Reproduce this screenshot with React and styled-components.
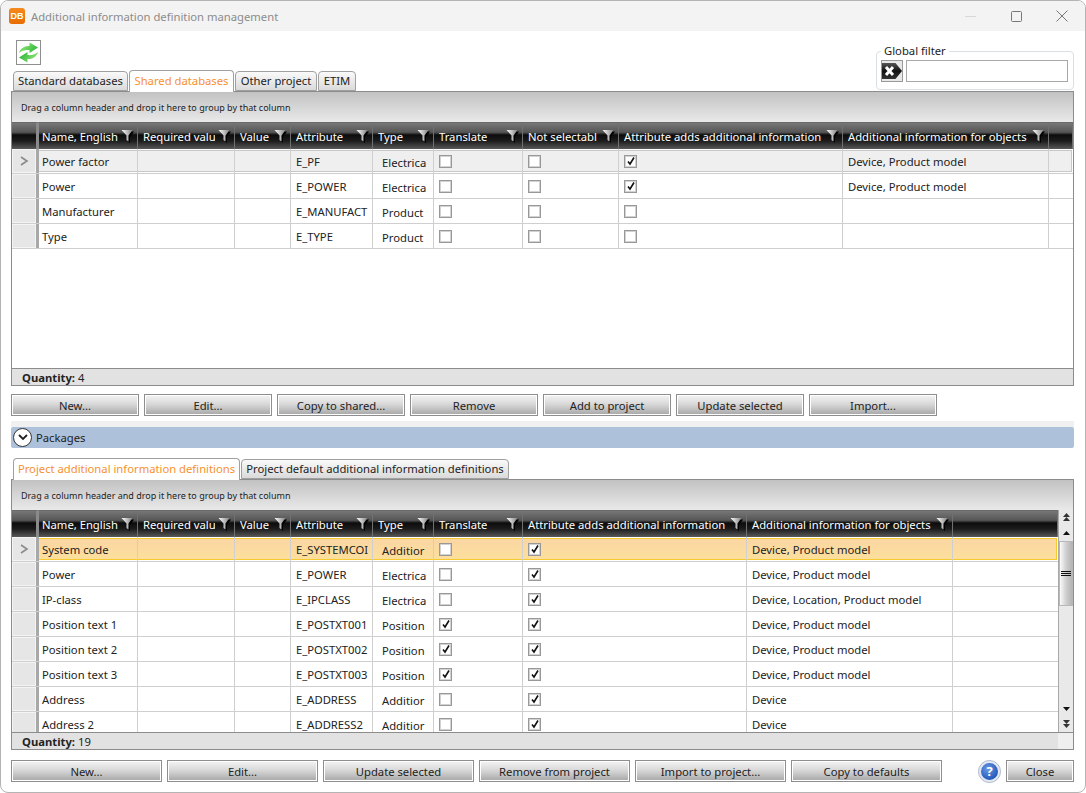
import React from 'react';
import styled, { createGlobalStyle } from 'styled-components';

const GlobalStyle = createGlobalStyle`
  html, body { margin: 0; padding: 0; background: #fff; }
  body { font-family: "Noto Sans", "Open Sans", "Liberation Sans", sans-serif; font-size: 11.25px; color: #222; }
  * { box-sizing: border-box; }
`;

const Window = styled.div`
  width: 1086px;
  height: 793px;
  display: flex;
  flex-direction: column;
  background: #fff;
  border: 1px solid #b4b4b4;
  border-radius: 8px;
  overflow: hidden;
`;
const TitleBar = styled.div`
  height: 30px;
  flex: none;
  display: flex;
  align-items: center;
  background: #f3f3f3;
  padding-left: 8px;
`;
const Logo = styled.div`
  width: 16px;
  height: 16px;
  border-radius: 3px;
  background: linear-gradient(#f58a1f, #e86c00);
  color: #fff;
  font-size: 9px;
  font-weight: 700;
  line-height: 16px;
  text-align: center;
  font-family: "Liberation Sans", sans-serif;
`;
const TitleText = styled.div`
  margin-left: 6px;
  font-size: 11.25px;
  color: #8c8c8c;
  flex: 1;
`;
const WinButton = styled.div`
  width: 46px;
  height: 30px;
  display: flex;
  align-items: center;
  justify-content: center;
`;
const Content = styled.div`
  flex: 1;
  display: flex;
  flex-direction: column;
  padding: 0 11px 0 10px;
  min-height: 0;
`;
const TopArea = styled.div`
  height: 60px;
  flex: none;
  display: flex;
  justify-content: space-between;
`;
const TopLeft = styled.div`
  display: flex;
  flex-direction: column;
  justify-content: space-between;
  padding: 9px 0 0 2px;
`;
const RefreshButton = styled.div`
  width: 25px;
  height: 25px;
  margin-left: 3px;
  border: 1px solid #8f8f8f;
  background: #fff;
  display: flex;
  align-items: center;
  justify-content: center;
`;
const FilterGroup = styled.fieldset`
  margin: 13px 0 1px;
  width: 198px;
  border: 1px solid #d8e0e6;
  border-radius: 4px;
  padding: 2px 5px 0 4px;
  display: flex;
  align-items: flex-start;
  gap: 3px;
  height: 46px;
  legend {
    margin-left: 0;
    padding: 0 3px;
    font-size: 11.25px;
    line-height: 14px;
    color: #222;
  }
`;
const ClearButton = styled.div`
  width: 22px;
  height: 22px;
  border: 1px solid #9a9a9a;
  background: #e8e8e8;
  display: flex;
  align-items: center;
  justify-content: center;
`;
const FilterInput = styled.input`
  width: 162px;
  height: 22px;
  border: 1px solid #a8a8a8;
  background: #fff;
  outline: none;
`;
const TabStrip = styled.div`
  display: flex;
  align-items: flex-end;
  gap: 1px;
  height: ${p => p.$h}px;
  flex: none;
  padding-left: ${p => p.$pad}px;
`;
const Tab = styled.div`
  width: ${p => p.$w}px;
  height: ${p => (p.$active ? 22 : 20)}px;
  border: 1px solid #a0a0a0;
  border-bottom: ${p => (p.$active ? 'none' : '1px solid #a0a0a0')};
  border-radius: 4px 4px 0 0;
  background: ${p => (p.$active ? '#fff' : 'linear-gradient(#fafafa, #dadada)')};
  color: ${p => (p.$active ? '#f7912f' : '#222')};
  display: flex;
  align-items: center;
  justify-content: center;
  white-space: nowrap;
  overflow: hidden;
  padding-bottom: ${p => (p.$active ? 2 : 1)}px;
  margin-bottom: ${p => (p.$active ? -1 : 0)}px;
  position: relative;
`;
const GridBox = styled.div`
  height: ${p => p.$h}px;
  flex: none;
  display: flex;
  flex-direction: column;
  border: 1px solid #8c8c8c;
  background: #fff;
`;
const GroupPanel = styled.div`
  height: 30px;
  flex: none;
  display: flex;
  align-items: center;
  padding-left: 9px;
  font-size: 9px;
  color: #222;
  background: linear-gradient(#c2c2c2, #e9e9e9);
`;
const GridBody = styled.div`
  flex: 1;
  display: flex;
  min-height: 0;
`;
const GridMain = styled.div`
  flex: 1;
  min-width: 0;
  display: flex;
  flex-direction: column;
  overflow: hidden;
`;
const Row = styled.div`
  display: grid;
  grid-template-columns: ${p => p.$cols};
  height: ${p => p.$h || 25}px;
  flex: none;
`;
const HeaderRow = styled(Row)`
  background: linear-gradient(#7a7a7a 0, #565656 38%, #0c0c0c 48%, #1c1c1c 70%, #585858 100%);
`;
const HeaderCell = styled.div`
  display: flex;
  align-items: center;
  justify-content: space-between;
  gap: 3px;
  min-width: 0;
  padding: 0 3px 0 ${p => p.$pad}px;
  color: #fff;
  border-right: 1px solid #707070;
  border-top: 1px solid #6a6a6a;
  &:first-child {
    border-right: 3px solid #8a8a8a;
  }
`;
const HeaderLabel = styled.span`
  overflow: hidden;
  white-space: nowrap;
  min-width: 0;
`;
const DataRow = styled(Row)`
  border-bottom: 1px solid #cfcfcf;
  background: ${p =>
    p.$state === 'active' ? 'linear-gradient(#fad5a4, #fde09b)' : p.$state === 'selected' ? '#efefef' : '#fff'};
  box-shadow: ${p =>
    p.$state === 'active'
      ? 'inset 0 0 0 1px #fff, inset 0 0 0 2px #f6c92e'
      : p.$state === 'selected'
      ? 'inset 0 0 0 1px #fff, inset 0 0 0 2px #c8c8c8'
      : 'none'};
`;
const RowHeader = styled.div`
  background: #fff;
  border-right: 3px solid #a8a8a8;
  display: flex;
`;
const RowHeaderFace = styled.div`
  flex: 1;
  background: #e6e6e6;
  border: 1px solid #f4f4f4;
  display: flex;
  align-items: center;
  justify-content: center;
`;
const Cell = styled.div`
  display: flex;
  align-items: center;
  min-width: 0;
  overflow: hidden;
  white-space: nowrap;
  padding-left: ${p => p.$pad}px;
  padding-top: ${p => (p.$low ? 2 : 0)}px;
  border-right: 1px solid #cfcfcf;
  &:last-child {
    border-right: none;
  }
`;
const CheckBox = styled.div`
  width: 13px;
  height: 13px;
  flex: none;
  border: 1px solid #989898;
  background: #fff;
  box-shadow: inset 0 0 0 1px #d2d2d2;
  display: flex;
  align-items: center;
  justify-content: center;
`;
const Footer = styled.div`
  height: 17px;
  flex: none;
  border-top: 1px solid #8c8c8c;
  background: ${p => (p.$scroll ? 'linear-gradient(90deg, #e2e2e2 calc(100% - 15px), #efefef 0)' : '#e2e2e2')};
  display: flex;
  align-items: center;
  padding-left: 10px;
  gap: 3px;
  b { font-weight: 700; }
`;
const ScrollBar = styled.div`
  width: 15px;
  flex: none;
  display: flex;
  flex-direction: column;
  background: #e9e9e9;
  border-left: 1px solid #a8a8a8;
`;
const ScrollEnd = styled.div`
  height: ${p => p.$h}px;
  flex: none;
  display: flex;
  align-items: center;
  justify-content: center;
`;
const ScrollThumb = styled.div`
  height: 65px;
  flex: none;
  border: 1px solid #b8b8b8;
  background: linear-gradient(90deg, #fafafa, #d0d0d0 50%, #b4b4b4);
  display: flex;
  align-items: center;
  justify-content: center;
`;
const ScrollTrack = styled.div`
  flex: 1;
`;
const ButtonRow = styled.div`
  display: flex;
  align-items: center;
  gap: 5px;
  margin-top: ${p => p.$top}px;
  height: 22px;
  flex: none;
`;
const ActionButton = styled.div`
  width: ${p => p.$w}px;
  height: 22px;
  flex: none;
  border: 1px solid #8e8e8e;
  box-shadow: inset 0 0 0 1px #fff;
  background: linear-gradient(#f4f4f4 0, #dcdcdc 40%, #d0d0d0 55%, #a6a6a6 100%);
  display: flex;
  align-items: center;
  justify-content: center;
  color: #222;
  padding-top: 1px;
`;
const Spacer = styled.div`
  flex: 1;
`;
const HelpIcon = styled.div`
  width: 21px;
  height: 21px;
  border-radius: 50%;
  background: radial-gradient(circle at 40% 35%, #6f9be6, #1f56b8 75%);
  border: 2px solid #e3e8f2;
  outline: 1px solid #a9b5cc;
  color: #fff;
  font-weight: 700;
  font-size: 13px;
  line-height: 17px;
  text-align: center;
  margin-right: 1px;
`;
const Strip = styled.div`
  height: 6px;
  margin-top: 5px;
  flex: none;
  background: #f0f0f0;
`;
const PackagesBar = styled.div`
  height: 21px;
  flex: none;
  background: #adc1da;
  border-radius: 2px;
  display: flex;
  align-items: center;
  gap: 4px;
  padding-left: 2px;
`;
const Expander = styled.div`
  width: 19px;
  height: 19px;
  border-radius: 50%;
  background: #fff;
  border: 1.5px solid #333;
  display: flex;
  align-items: center;
  justify-content: center;
`;

const FunnelIcon = () => (
  <svg width="13" height="14" viewBox="0 0 13 14" style={{ flex: 'none' }}>
    <defs>
      <linearGradient id="fg" x1="0" x2="1" y1="0" y2="0">
        <stop offset="0" stopColor="#fff" />
        <stop offset="1" stopColor="#808080" />
      </linearGradient>
    </defs>
    <path d="M2 2.500h11L9 8v6l-2-1.500V8z" fill="#000" />
    <path d="M0.500 1h11L7.500 6.500v6l-2-1.500V6.500z" fill="url(#fg)" />
  </svg>
);
const Chevron = () => (
  <svg width="9" height="10" viewBox="0 0 9 10">
    <path d="M1 1l6 4-6 4" fill="none" stroke="#8a8a8a" strokeWidth="1.6" />
  </svg>
);
const Tick = () => (
  <svg width="10" height="10" viewBox="0 0 10 10">
    <path d="M2 5.500l2 2.500L8 1.500" fill="none" stroke="#111" strokeWidth="1.6" />
  </svg>
);
const refreshArrow = 'M2 12C3 7.500 7.500 4.500 12.500 5V1.500L21 6.500 12.500 12V9C8.500 8.500 4.500 9.500 2 12z';
const RefreshIcon = () => (
  <svg width="23" height="23" viewBox="0 0 23 23">
    <defs>
      <linearGradient id="rg" x1="0" x2="1" y1="0" y2="0.400">
        <stop offset="0" stopColor="#a4ee86" />
        <stop offset="1" stopColor="#36bb3e" />
      </linearGradient>
    </defs>
    <path d={refreshArrow} fill="url(#rg)" />
    <path d={refreshArrow} fill="url(#rg)" transform="rotate(180 11.500 11.500)" />
  </svg>
);
const ClearIcon = () => (
  <svg width="20" height="20" viewBox="0 0 20 20">
    <defs>
      <linearGradient id="cg" x1="0" x2="0" y1="0" y2="1">
        <stop offset="0" stopColor="#555" />
        <stop offset="0.5" stopColor="#111" />
        <stop offset="1" stopColor="#333" />
      </linearGradient>
    </defs>
    <path d="M0 2h13.500L20 10l-6.500 8H0z" fill="url(#cg)" />
    <path d="M4 6l7 8M11 6l-7 8" stroke="#fff" strokeWidth="3" />
  </svg>
);
const Arrow = ({ down }) => (
  <svg width="9" height="6" viewBox="0 0 9 6">
    <path d={down ? 'M1 1h7L4.500 5z' : 'M1 5h7L4.500 1z'} fill="#111" />
  </svg>
);
const DoubleArrow = ({ down }) => (
  <svg width="9" height="10" viewBox="0 0 9 10">
    <path d={down ? 'M1 1h7L4.500 5zM1 5h7L4.500 9z' : 'M4.500 1L8 5H1zM4.500 5L8 9H1z'} fill="#333" />
  </svg>
);

const topColumns = [
  { title: 'Name, English', w: 99, pad: 3 },
  { title: 'Required valu', w: 97, pad: 5 },
  { title: 'Value', w: 56, pad: 5 },
  { title: 'Attribute', w: 82, pad: 5 },
  { title: 'Type', w: 61, pad: 5, cellPad: 9, low: true },
  { title: 'Translate', w: 89, pad: 5, check: true },
  { title: 'Not selectabl', w: 96, pad: 5, check: true },
  { title: 'Attribute adds additional information', w: 224, pad: 5, check: true },
  { title: 'Additional information for objects', w: 206, pad: 5 },
];
const bottomColumns = [
  { title: 'Name, English', w: 99, pad: 3 },
  { title: 'Required valu', w: 97, pad: 5 },
  { title: 'Value', w: 56, pad: 5 },
  { title: 'Attribute', w: 82, pad: 5 },
  { title: 'Type', w: 61, pad: 5, cellPad: 9, low: true },
  { title: 'Translate', w: 89, pad: 5, check: true },
  { title: 'Attribute adds additional information', w: 224, pad: 5, check: true },
  { title: 'Additional information for objects', w: 206, pad: 5 },
];
const topRows = [
  ['Power factor', '', '', 'E_PF', 'Electrica', false, false, true, 'Device, Product model'],
  ['Power', '', '', 'E_POWER', 'Electrica', false, false, true, 'Device, Product model'],
  ['Manufacturer', '', '', 'E_MANUFACT', 'Product', false, false, false, ''],
  ['Type', '', '', 'E_TYPE', 'Product', false, false, false, ''],
];
const bottomRows = [
  ['System code', '', '', 'E_SYSTEMCOI', 'Additior', false, true, 'Device, Product model'],
  ['Power', '', '', 'E_POWER', 'Electrica', false, true, 'Device, Product model'],
  ['IP-class', '', '', 'E_IPCLASS', 'Electrica', false, true, 'Device, Location, Product model'],
  ['Position text 1', '', '', 'E_POSTXT001', 'Position', true, true, 'Device, Product model'],
  ['Position text 2', '', '', 'E_POSTXT002', 'Position', true, true, 'Device, Product model'],
  ['Position text 3', '', '', 'E_POSTXT003', 'Position', true, true, 'Device, Product model'],
  ['Address', '', '', 'E_ADDRESS', 'Additior', false, true, 'Device'],
  ['Address 2', '', '', 'E_ADDRESS2', 'Additior', false, true, 'Device'],
];

const template = columns => `27px ${columns.map(c => `${c.w}px`).join(' ')} 1fr`;

const DataGrid = ({ columns, rows, height, rowState, quantity, scroll }) => {
  const cols = template(columns);
  return (
    <GridBox $h={height}>
      <GroupPanel>Drag a column header and drop it here to group by that column</GroupPanel>
      <GridBody>
        <GridMain>
          <HeaderRow $cols={cols} $h={27}>
            <HeaderCell $pad={0} />
            {columns.map(c => (
              <HeaderCell key={c.title} $pad={c.pad}>
                <HeaderLabel>{c.title}</HeaderLabel>
                <FunnelIcon />
              </HeaderCell>
            ))}
            <HeaderCell $pad={0} />
          </HeaderRow>
          {rows.map((row, i) => (
            <DataRow key={i} $cols={cols} $state={i === 0 ? rowState : undefined}>
              <RowHeader>
                <RowHeaderFace>{i === 0 && <Chevron />}</RowHeaderFace>
              </RowHeader>
              {columns.map((c, j) => (
                <Cell key={c.title} $pad={c.check ? 5 : c.cellPad || c.pad} $low={c.low}>
                  {c.check ? <CheckBox>{row[j] && <Tick />}</CheckBox> : row[j]}
                </Cell>
              ))}
              <Cell $pad={0} />
            </DataRow>
          ))}
        </GridMain>
        {scroll && (
          <ScrollBar>
            <ScrollEnd $h={14}><DoubleArrow /></ScrollEnd>
            <ScrollEnd $h={17}><Arrow /></ScrollEnd>
            <ScrollThumb>
              <svg width="10" height="6" viewBox="0 0 10 6">
                <path d="M0 .5h10M0 2.500h10M0 4.500h10" stroke="#111" />
              </svg>
            </ScrollThumb>
            <ScrollTrack />
            <ScrollEnd $h={14}><Arrow down /></ScrollEnd>
            <ScrollEnd $h={16}><DoubleArrow down /></ScrollEnd>
          </ScrollBar>
        )}
      </GridBody>
      <Footer $scroll={scroll}><b>Quantity:</b> {quantity}</Footer>
    </GridBox>
  );
};

export default function App() {
  return (
    <>
      <GlobalStyle />
      <Window>
        <TitleBar>
          <Logo>DB</Logo>
          <TitleText>Additional information definition management</TitleText>
          <WinButton>
            <svg width="11" height="11" viewBox="0 0 11 11"><path d="M0 5.500h11" stroke="#d8d8d8" /></svg>
          </WinButton>
          <WinButton>
            <svg width="11" height="11" viewBox="0 0 11 11"><rect x=".5" y=".5" width="10" height="10" rx="1" fill="none" stroke="#777" /></svg>
          </WinButton>
          <WinButton>
            <svg width="12" height="12" viewBox="0 0 12 12"><path d="M.5.5l11 11M11.500.5l-11 11" stroke="#777" /></svg>
          </WinButton>
        </TitleBar>
        <Content>
          <TopArea>
            <TopLeft>
              <RefreshButton><RefreshIcon /></RefreshButton>
              <TabStrip $h={22} $pad={0}>
                <Tab $w={115}>Standard databases</Tab>
                <Tab $w={105} $active>Shared databases</Tab>
                <Tab $w={82}>Other project</Tab>
                <Tab $w={38}>ETIM</Tab>
              </TabStrip>
            </TopLeft>
            <FilterGroup>
              <legend>Global filter</legend>
              <ClearButton><ClearIcon /></ClearButton>
              <FilterInput />
            </FilterGroup>
          </TopArea>
          <DataGrid columns={topColumns} rows={topRows} height={295} rowState="selected" quantity={4} />
          <ButtonRow $top={8}>
            <ActionButton $w={128}>New...</ActionButton>
            <ActionButton $w={128}>Edit...</ActionButton>
            <ActionButton $w={128}>Copy to shared...</ActionButton>
            <ActionButton $w={128}>Remove</ActionButton>
            <ActionButton $w={128}>Add to project</ActionButton>
            <ActionButton $w={128}>Update selected</ActionButton>
            <ActionButton $w={128}>Import...</ActionButton>
          </ButtonRow>
          <Strip />
          <PackagesBar>
            <Expander>
              <svg width="10" height="7" viewBox="0 0 10 7"><path d="M1 1l4 4 4-4" fill="none" stroke="#222" strokeWidth="1.8" /></svg>
            </Expander>
            Packages
          </PackagesBar>
          <TabStrip $h={31} $pad={2}>
            <Tab $w={227} $active>Project additional information definitions</Tab>
            <Tab $w={268}>Project default additional information definitions</Tab>
          </TabStrip>
          <DataGrid columns={bottomColumns} rows={bottomRows} height={271} rowState="active" quantity={19} scroll />
          <ButtonRow $top={10}>
            <ActionButton $w={151}>New...</ActionButton>
            <ActionButton $w={151}>Edit...</ActionButton>
            <ActionButton $w={151}>Update selected</ActionButton>
            <ActionButton $w={151}>Remove from project</ActionButton>
            <ActionButton $w={151}>Import to project...</ActionButton>
            <ActionButton $w={151}>Copy to defaults</ActionButton>
            <Spacer />
            <HelpIcon>?</HelpIcon>
            <ActionButton $w={68}>Close</ActionButton>
          </ButtonRow>
        </Content>
      </Window>
    </>
  );
}
